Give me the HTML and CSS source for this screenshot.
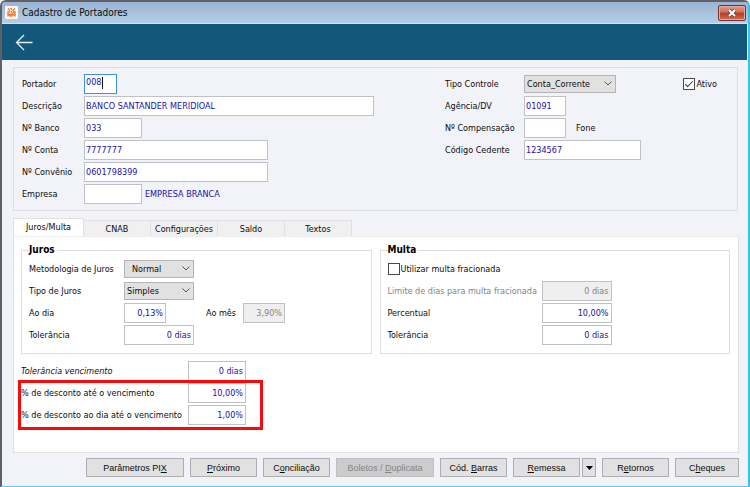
FILE: index.html
```html
<!DOCTYPE html>
<html lang="pt-BR">
<head>
  <meta charset="UTF-8">
  <meta name="viewport" content="width=device-width, initial-scale=1.0">
  <title>Cadastro de Portadores</title>
  <link rel="stylesheet" href="styles.css">
</head>
<body>
  <div class="window">
    <header class="titlebar">
      <svg class="app-icon" width="13" height="13" viewBox="0 0 13 13">
        <rect width="13" height="13" rx="1" fill="#fff8f2"/>
        <path d="M3 2.500l2 2M5.500 2l1.500 1.500M10 2.500L7.500 5M2.500 5.500L5 6M8 6.500l2.500-1M6 5l1 2M3 10.500V7.500L5.500 10V7.500M7 10.500V7.500L8.500 9L10 7.500V10.500" stroke="#f07a35" stroke-width="1.400" fill="none"/>
      </svg>
      <h1>Cadastro de Portadores</h1>
      <button type="button" class="close" aria-label="Fechar">
        <svg width="10" height="8" viewBox="0 0 10 8"><path d="M2 1l6 6M8 1L2 7" stroke="#5b3a3a" stroke-width="3.600"/><path d="M2 1l6 6M8 1L2 7" stroke="#fff" stroke-width="2.200"/></svg>
      </button>
    </header>

    <nav class="toolbar">
      <button type="button" class="back" aria-label="Voltar">
        <svg width="18" height="18" viewBox="0 0 18 18"><path d="M17.500 9.500H1.500M9 2L1.500 9.500L9 17" stroke="#e6eef2" stroke-width="1.300" fill="none"/></svg>
      </button>
    </nav>

    <main>
      <section class="panel">
        <div class="rows">
          <div class="row"><label for="portador">Portador</label><span class="focused"><input id="portador" class="w-33" type="text" value="008"></span></div>
          <div class="row"><label for="descricao">Descrição</label><input id="descricao" class="w-290" type="text" value="BANCO SANTANDER MERIDIOAL"></div>
          <div class="row"><label for="banco">Nº Banco</label><input id="banco" class="w-58" type="text" value="033"></div>
          <div class="row"><label for="conta">Nº Conta</label><input id="conta" class="w-184" type="text" value="7777777"></div>
          <div class="row"><label for="convenio">Nº Convênio</label><input id="convenio" class="w-184" type="text" value="0601798399"></div>
          <div class="row"><label for="empresa">Empresa</label><input id="empresa" class="w-58" type="text"><output class="company" for="empresa">EMPRESA BRANCA</output></div>
        </div>
        <div class="rows rows-right">
          <div class="row">
            <label for="tipo">Tipo Controle</label>
            <span class="combo w-92"><select id="tipo"><option>Conta_Corrente</option></select><svg width="8" height="5" viewBox="0 0 8 5"><path d="M.5.5L4 4L7.500.5"/></svg></span>
            <label class="check push"><input type="checkbox" checked>Ativo</label>
          </div>
          <div class="row"><label for="agencia">Agência/DV</label><input id="agencia" class="w-42" type="text" value="01091"></div>
          <div class="row"><label for="compensacao">Nº Compensação</label><input id="compensacao" class="w-42" type="text"><span class="after">Fone</span></div>
          <div class="row"><label for="cedente">Código Cedente</label><input id="cedente" class="w-117" type="text" value="1234567"></div>
        </div>
      </section>

      <div class="tabs" role="tablist">
        <button type="button" class="tab active" role="tab" aria-selected="true">Juros/Multa</button>
        <button type="button" class="tab" role="tab">CNAB</button>
        <button type="button" class="tab" role="tab">Configurações</button>
        <button type="button" class="tab" role="tab">Saldo</button>
        <button type="button" class="tab" role="tab">Textos</button>
      </div>

      <section class="tab-page" role="tabpanel">
        <div class="groups">
          <fieldset class="juros">
            <legend>Juros</legend>
            <div class="row">
              <label for="metodologia">Metodologia de Juros</label>
              <span class="combo w-70"><select id="metodologia" class="indent"><option>Normal</option></select><svg width="8" height="5" viewBox="0 0 8 5"><path d="M.5.5L4 4L7.500.5"/></svg></span>
            </div>
            <div class="row">
              <label for="tipojuros">Tipo de Juros</label>
              <span class="combo w-70"><select id="tipojuros"><option>Simples</option></select><svg width="8" height="5" viewBox="0 0 8 5"><path d="M.5.5L4 4L7.500.5"/></svg></span>
            </div>
            <div class="row">
              <label for="aodia">Ao dia</label><input id="aodia" class="num w-42" type="text" value="0,13%">
              <label class="inner" for="aomes">Ao mês</label><input id="aomes" class="num w-42" type="text" value="3,90%" disabled>
            </div>
            <div class="row"><label for="tolerancia">Tolerância</label><input id="tolerancia" class="num w-70" type="text" value="0 dias"></div>
          </fieldset>

          <fieldset class="multa">
            <legend>Multa</legend>
            <div class="row"><label class="check"><input type="checkbox">Utilizar multa fracionada</label></div>
            <div class="row"><label class="off" for="limite">Limite de dias para multa fracionada</label><input id="limite" class="num w-70" type="text" value="0 dias" disabled></div>
            <div class="row"><label for="percentual">Percentual</label><input id="percentual" class="num w-70" type="text" value="10,00%"></div>
            <div class="row"><label for="toleranciamulta">Tolerância</label><input id="toleranciamulta" class="num w-70" type="text" value="0 dias"></div>
          </fieldset>
        </div>

        <div class="discounts">
          <div class="row"><label class="italic" for="vencimento">Tolerância vencimento</label><input id="vencimento" class="num w-58" type="text" value="0 dias"></div>
          <div class="highlight">
            <div class="row"><label for="desconto">% de desconto até o vencimento</label><input id="desconto" class="num w-58" type="text" value="10,00%"></div>
            <div class="row"><label for="descontodia">% de desconto ao dia até o vencimento</label><input id="descontodia" class="num w-58" type="text" value="1,00%"></div>
          </div>
        </div>
      </section>

      <footer class="actions">
        <button type="button" class="btn wide">Parâmetros PI<u>X</u></button>
        <button type="button" class="btn"><u>P</u>róximo</button>
        <button type="button" class="btn">C<u>o</u>nciliação</button>
        <button type="button" class="btn wide" disabled>Boletos / <u>D</u>uplicata</button>
        <button type="button" class="btn">Cód. <u>B</u>arras</button>
        <div class="split">
          <button type="button" class="btn"><u>R</u>emessa</button>
          <button type="button" class="btn arrow" aria-label="Mais opções"><svg width="7" height="4" viewBox="0 0 7 4"><path d="M0 0h7L3.500 4z"/></svg></button>
        </div>
        <button type="button" class="btn">R<u>e</u>tornos</button>
        <button type="button" class="btn last">C<u>h</u>eques</button>
      </footer>
    </main>
  </div>
</body>
</html>
```

FILE: styles.css
```css
*, *::after {box-sizing: border-box;}
body {margin: 0; background: #f2f3f9; color: #0c0c0c; font-family: "DejaVu Sans Condensed", "Noto Sans", sans-serif; font-size: 9px; line-height: 14px;}
button, input, select {font: inherit; color: inherit; margin: 0;}
.window {display: flex; flex-direction: column; min-height: 100vh; border: 2px solid #5f6068; border-right-color: #35c4ee; border-bottom: 1px solid #5fc9ea; border-radius: 6px 6px 0 0; background: #f2f3f9;}

/* Title bar */
.titlebar {display: flex; align-items: center; height: 22px; padding: 0 2px 0 3px; background: linear-gradient(#98b4d2, #b6cde6); border-radius: 4px 4px 0 0; border-bottom: 1px solid #d5e2ef;}
.titlebar h1 {flex: 1; margin: 0 0 0 4px; font-size: 10px; font-weight: normal;}
.close {display: flex; align-items: center; justify-content: center; width: 28px; height: 16px; padding: 0; border: 1px solid #6d3434; border-radius: 2px; background: linear-gradient(#dfa092, #cf6a57 45%, #b83a26 50%, #cf6c50); box-shadow: inset 0 0 0 1px #e2a99d;}
.toolbar {display: flex; align-items: center; height: 36px; margin-right: 1px; padding-left: 13px; background: #13587a;}
.back {display: flex; padding: 0; border: 0; background: none;}

main {flex: 1; display: flex; flex-direction: column; padding: 7px 9px 9px 11px;}

/* Rows and fields */
.row {display: flex; align-items: center; height: 20px; margin-bottom: 2px; white-space: nowrap;}
.row > label:first-child {flex: none;}
input[type="text"] {height: 20px; padding: 0 2px 0 1px; border: 1px solid #bfc1c8; border-radius: 0; background: #fff; color: #1a10a8;}
input[type="text"]:disabled {background: #efefef; color: #858585;}
.num {text-align: right;}
.w-33 {width: 33px;}
.w-42 {width: 42px;}
.w-58 {width: 58px;}
.w-70 {width: 70px;}
.w-92 {width: 92px;}
.w-117 {width: 117px;}
.w-184 {width: 184px;}
.w-290 {width: 290px;}
.focused {position: relative; display: flex;}
.focused input[type="text"] {border-color: #3b93dd; padding-bottom: 4px;}
.focused::after {content: ""; position: absolute; left: 18px; top: 3px; width: 1px; height: 12px; background: #111;}
.combo {position: relative; display: flex;}
.combo select {width: 100%; height: 18px; padding: 0 0 0 2px; border: 1px solid #b4b4b8; border-radius: 0; background: #e1e1e1; appearance: none;}
.combo select.indent {padding-left: 7px;}
.combo svg {position: absolute; right: 4px; top: 6px; pointer-events: none; fill: none; stroke: #555;}
.check {display: flex; align-items: center; gap: 1px;}
.check input {flex: none; width: 12px; height: 12px; border: 1px solid #4a4a4a; background: #fff; appearance: none;}
.check input:checked::after {content: ""; display: block; width: 8px; height: 4px; margin: 2px 0 0 1px; border: solid #333; border-width: 0 0 1px 1px; transform: rotate(-45deg);}
.off {color: #858585;}
.italic {font-style: italic;}

/* Main data */
.panel {display: grid; grid-template-columns: 1fr 292px; height: 144px; margin-right: 1px; padding: 6px 0 0 8px; border: 1px solid #dedfe3;}
.panel .row > label:first-child {width: 62px;}
.panel .rows-right .row > label:first-child {width: 79px;}
.company {margin-left: 3px; color: #1a10a8;}
.after {margin-left: 10px;}
.push {margin-left: auto; margin-right: 20px;}

/* Tabs */
.tabs {display: flex; align-items: flex-end; margin-top: 7px;}
.tab {width: 67px; height: 16px; padding: 0; border: 1px solid #e0e0e2; border-left: 0; border-bottom: 0; background: #f0f0f0; line-height: 14px;}
.tab.active {width: 71px; height: 18px; padding-bottom: 2px; border-left: 1px solid #e0e0e2; background: #fff;}
.tab-page {flex: 1; padding: 5px 8px 0 7px; border: 1px solid #e0e0e2; border-top-color: #ececee; background: #fff;}
.groups {display: flex; gap: 8px;}
fieldset {flex: 1; min-width: 0; margin: 0; padding: 1px 0 6px 7px; border: 1px solid #dedede;}
legend {height: 16px; margin: 0; padding: 0 2px 0 0; font-size: 10px; font-weight: bold; line-height: 16px; color: #000;}
.juros .row > label:first-child {width: 95px;}
.multa .row > label:first-child {width: 154px;}
.inner {width: 37px; margin-left: 40px;}
.discounts {padding-top: 7px;}
.discounts .row > label:first-child {width: 167px;}
.highlight {position: relative;}
.highlight::after {content: ""; position: absolute; left: -3px; top: -3px; width: 245px; height: 50px; border: 3px solid #fa0a0a; pointer-events: none;}

/* Bottom buttons */
.actions {display: flex; justify-content: flex-end; gap: 6px; padding-top: 5px;}
.btn {width: 67px; height: 19px; padding: 0; border: 1px solid #adadb2; background: #e1e1e1; font-family: "Liberation Sans", Arial, sans-serif; line-height: 14px; white-space: nowrap;}
.btn.wide {width: 98px;}
.btn.last {width: 64px;}
.btn:disabled {border-color: #bfbfbf; background: #ccc; color: #858585;}
.split {display: flex; gap: 2px;}
.btn.arrow {display: flex; align-items: center; justify-content: center; width: 14px;}
```
